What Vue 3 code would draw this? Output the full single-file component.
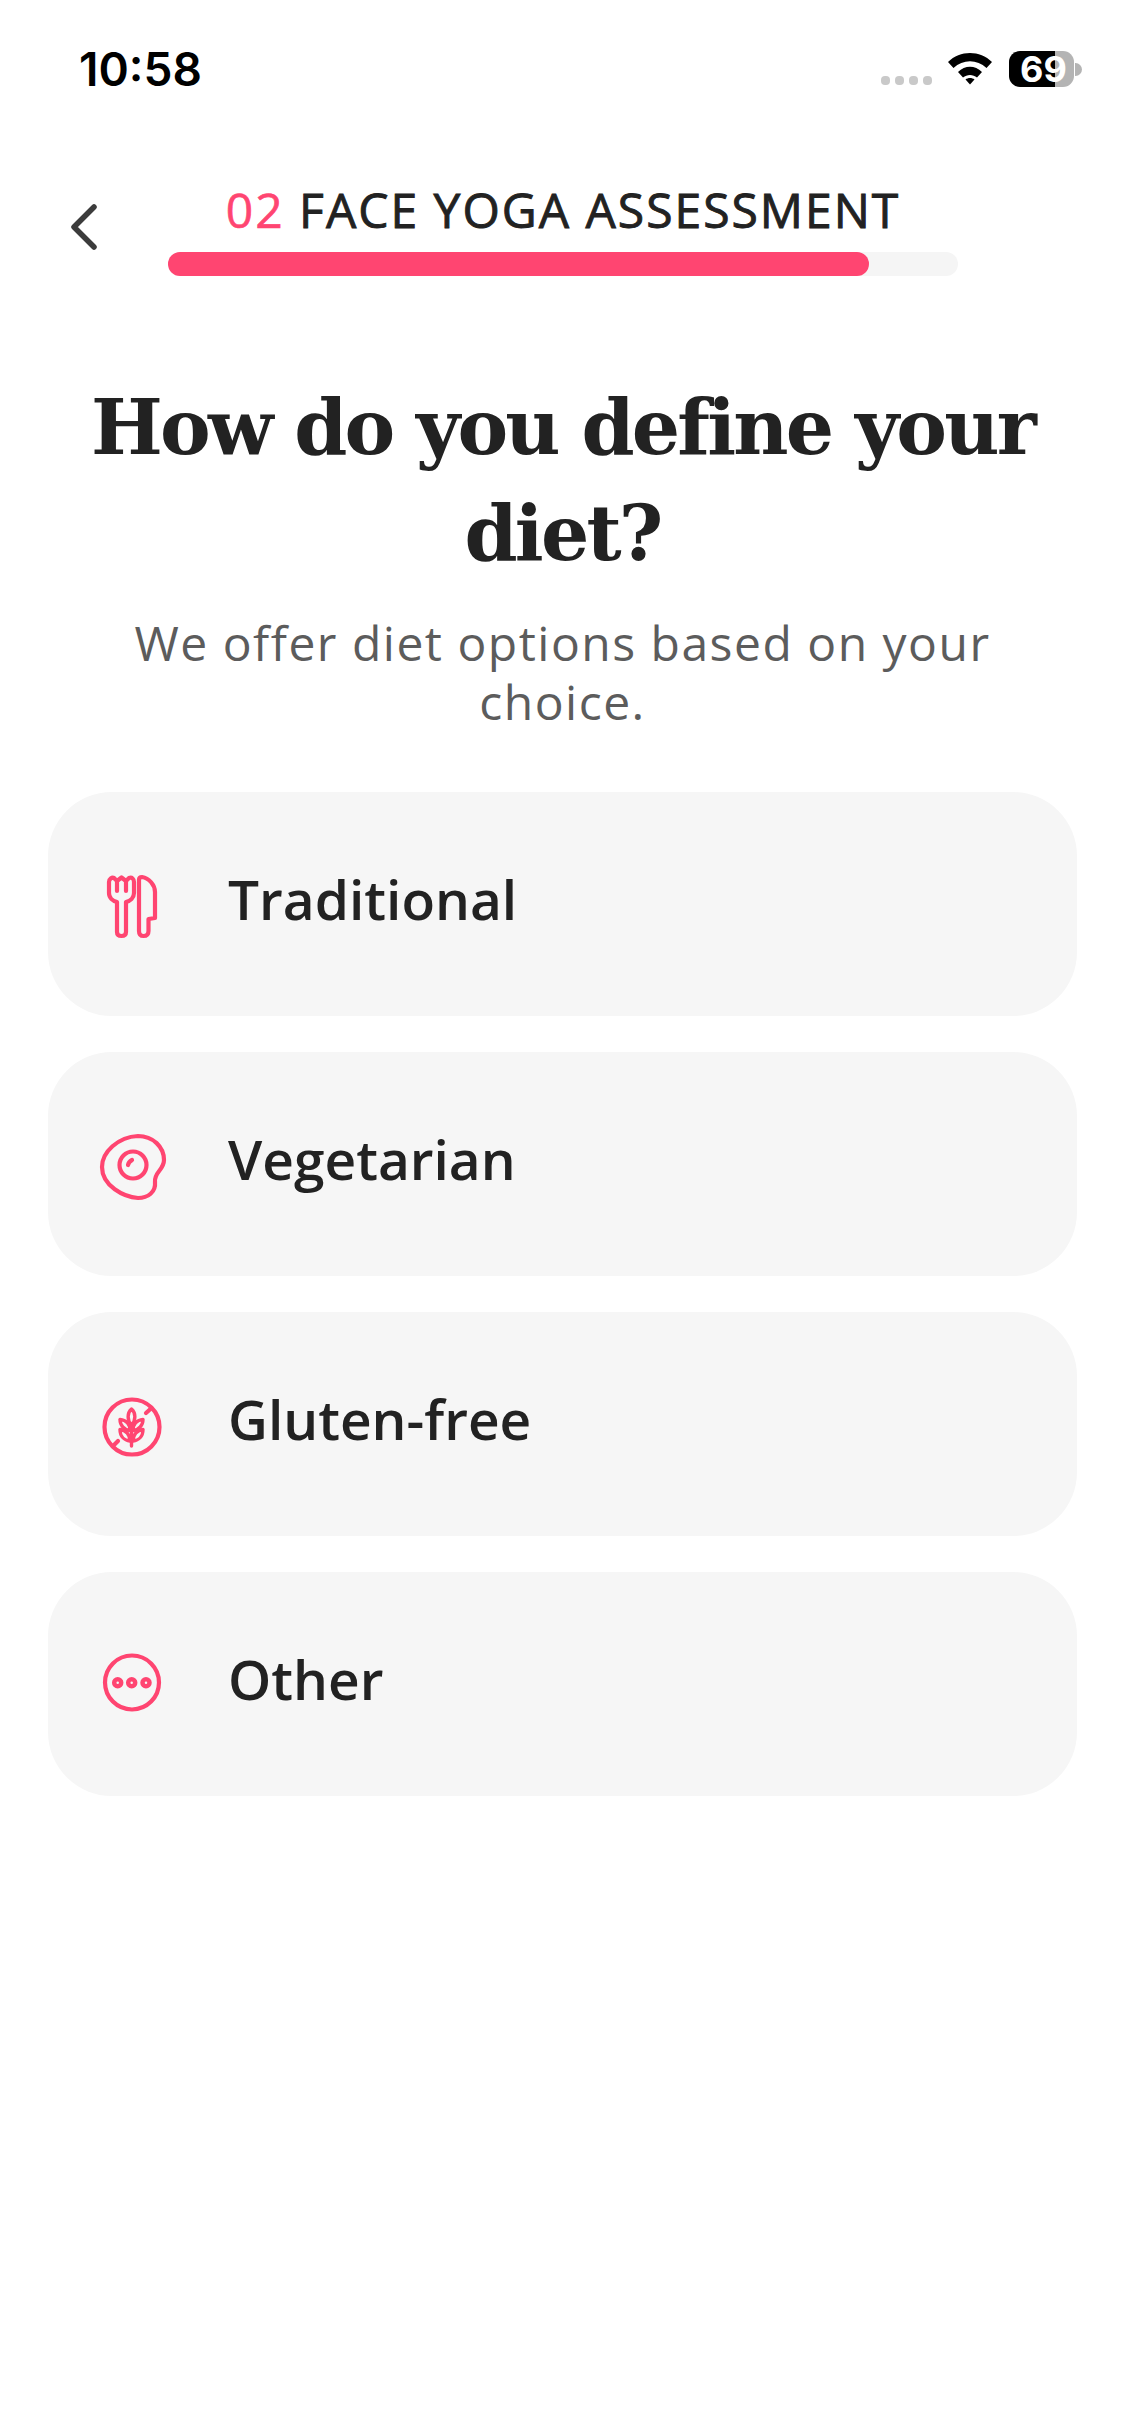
<script setup>
const options = [
  { label: 'Traditional', icon: 'fork' },
  { label: 'Vegetarian', icon: 'egg' },
  { label: 'Gluten-free', icon: 'wheat' },
  { label: 'Other', icon: 'dots' },
]
</script>

<template>
  <main class="screen">
    <div class="status">
      <span class="time">10:58</span>
      <div class="status-right">
        <div class="signal"><i></i><i></i><i></i><i></i></div>
        <svg class="wifi" width="46" height="34" viewBox="0 0 46 34">
          <path d="M1 11 C13 -1 33 -1 45 11 L39.5 17 C30 8 16 8 6.5 17Z" fill="#000"/>
          <path d="M11 21 C18 14 28 14 35 21 L30 26.5 C26 23 20 23 16 26.5Z" fill="#000"/>
          <path d="M18.5 28.5 C21 26.5 25 26.5 27.5 28.5 L23 33.5Z" fill="#000"/>
        </svg>
        <div class="battery">
          <div class="batt-body"><span class="batt-text">69</span></div>
          <div class="batt-nub"></div>
        </div>
      </div>
    </div>

    <header class="header">
      <button class="back" aria-label="Back">
        <svg width="30" height="46" viewBox="0 0 30 46">
          <path d="M26 3 L6 23 L26 43" fill="none" stroke="#3c3c3c" stroke-width="5.500" stroke-linecap="round" stroke-linejoin="round"/>
        </svg>
      </button>
      <div class="head-main">
        <div class="head-title"><span class="num">02</span> FACE YOGA ASSESSMENT</div>
        <div class="track"><div class="fill"></div></div>
      </div>
    </header>

    <h1 class="title">How do you define your diet?</h1>
    <p class="sub">We offer diet options based on your choice.</p>

    <section class="list">
      <div v-for="o in options" :key="o.label" class="card">
        <svg class="icon" width="120" height="120" :viewBox="o.icon === 'dots' ? '0 0 120 120' : '0 -6 120 120'" fill="none" stroke="#ff4571" stroke-width="4.200" stroke-linecap="round" stroke-linejoin="round">
          <g v-if="o.icon === 'fork'">
            <path d="M34 28 L37 31 L41.5 27.5 L46 31 L49 28 C52 27 54 29 54 32 V43 C54 48 50 51 46 52 V82 C46 85 44 86 41.5 86 C39 86 37 85 37 82 V52 C33 51 29 48 29 43 V32 C29 29 32 27 34 28Z"/>
            <path d="M37 32 V41 M46 32 V41"/>
            <path d="M59 30 C59 28 60 27 62 27 C69 28 75 35 75 42 V68 L68.5 69 V81 C68.5 85 66 86 63.5 86 C61 86 59 85 59 81 Z"/>
          </g>
          <g v-else-if="o.icon === 'egg'">
            <path d="M22 57 C22 42 38 27 58 26 C73 26 84 37 84 50 C84 60 74 62 75 72 C76 82 68 88 58 88 C44 87 22 76 22 57Z"/>
            <circle cx="53" cy="55" r="13.5"/>
            <path d="M48 55 C48.5 52.5 50 51 52 50"/>
          </g>
          <g v-else-if="o.icon === 'wheat'">
            <circle cx="52" cy="57" r="27.5"/>
            <path d="M66 43 L71 38.5 M33.5 75.5 L38 71"/>
            <g stroke-width="3.400">
              <path d="M51.500 39 C47 43 47 50 51.500 55 C56 50 56 43 51.500 39Z"/>
              <path d="M51.500 76 V56"/>
              <path d="M40 49.500 C40 55 44 60 50 60.500 C50 54 46 50 40 49.500Z"/>
              <path d="M63 49.500 C63 55 59 60 53 60.500 C53 54 57 50 63 49.500Z"/>
              <path d="M40 59.500 C40 66 44 70.500 50 71 C50 65 46 60 40 59.500Z"/>
              <path d="M63 59.500 C63 66 59 70.500 53 71 C53 65 57 60 63 59.500Z"/>
            </g>
          </g>
          <g v-else>
            <circle cx="52" cy="58.500" r="27"/>
            <circle cx="37.700" cy="58.700" r="3.500" stroke-width="4.500"/>
            <circle cx="51.700" cy="58.700" r="3.500" stroke-width="4.500"/>
            <circle cx="66" cy="58.700" r="3.500" stroke-width="4.500"/>
          </g>
        </svg>
        <span class="label">{{ o.label }}</span>
      </div>
    </section>
  </main>
</template>

<style scoped>
.screen {
  width: 1125px;
  height: 2436px;
  background: #fff;
  font-family: "Open Sans", sans-serif;
  color: #222;
  overflow: hidden;
}
.status {
  height: 136px;
  box-sizing: border-box;
  padding: 47px 43px 0 79px;
  display: flex;
  justify-content: space-between;
  align-items: flex-start;
}
.time {
  font-family: Inter, sans-serif;
  font-weight: 600;
  font-size: 46px;
  line-height: 44px;
  color: #000;
}
.status-right {
  display: flex;
  align-items: flex-start;
  padding-top: 4px;
}
.signal {
  display: flex;
  gap: 5px;
  margin-top: 25px;
  margin-right: 15px;
}
.signal i {
  width: 9px;
  height: 9px;
  border-radius: 4px;
  background: #c9c9c9;
}
.wifi {
  margin-right: 16px;
}
.battery {
  display: flex;
  align-items: center;
  height: 36px;
}
.batt-body {
  width: 65px;
  height: 36px;
  border-radius: 11px;
  background: linear-gradient(90deg, #000 46px, #b4b4b4 46px);
  display: flex;
  align-items: center;
  padding-left: 11px;
  box-sizing: border-box;
}
.batt-text {
  font-family: Inter, sans-serif;
  font-weight: 700;
  font-size: 36px;
  line-height: 36px;
  color: #fff;
}
.batt-nub {
  width: 7px;
  height: 13px;
  border-radius: 0 7px 7px 0;
  background: #b4b4b4;
  margin-left: 1px;
}
.header {
  display: grid;
  grid-template-columns: 168px 790px;
  align-items: start;
}
.back {
  border: 0;
  background: none;
  padding: 68px 0 0 68px;
  text-align: left;
  line-height: 0;
}
.head-main {
  display: flex;
  flex-direction: column;
  align-items: stretch;
}
.head-title {
  font-size: 48px;
  line-height: 66px;
  font-weight: 500;
  letter-spacing: 2px;
  text-align: center;
  color: #222;
  white-space: nowrap;
  margin-top: 41px;
  -webkit-text-stroke: 0.9px #222;
}
.num {
  color: #ff4571;
  -webkit-text-stroke: 0.6px #ff4571;
}
.track {
  height: 24px;
  margin-top: 9px;
  border-radius: 12px;
  background: #f5f5f5;
}
.fill {
  width: 701px;
  height: 100%;
  border-radius: 12px;
  background: #ff4571;
}
.title {
  margin: 99px 70px 0;
  font-family: "DejaVu Serif", serif;
  font-weight: 700;
  font-size: 76px;
  line-height: 106px;
  letter-spacing: -2.800px;
  text-align: center;
  color: #222;
}
.sub {
  margin: 26px 120px 0;
  font-size: 48px;
  line-height: 59px;
  letter-spacing: 1.5px;
  text-align: center;
  color: #5c5c5c;
}
.list {
  margin: 61px 48px 0;
  display: flex;
  flex-direction: column;
  gap: 36px;
}
.card {
  height: 224px;
  border-radius: 64px;
  background: #f6f6f6;
  display: flex;
  align-items: center;
  padding-left: 32px;
  gap: 28px;
}
.icon {
  flex: none;
}
.label {
  font-size: 55px;
  line-height: 75px;
  font-weight: 600;
  color: #222;
  margin-top: -12px;
}
</style>
